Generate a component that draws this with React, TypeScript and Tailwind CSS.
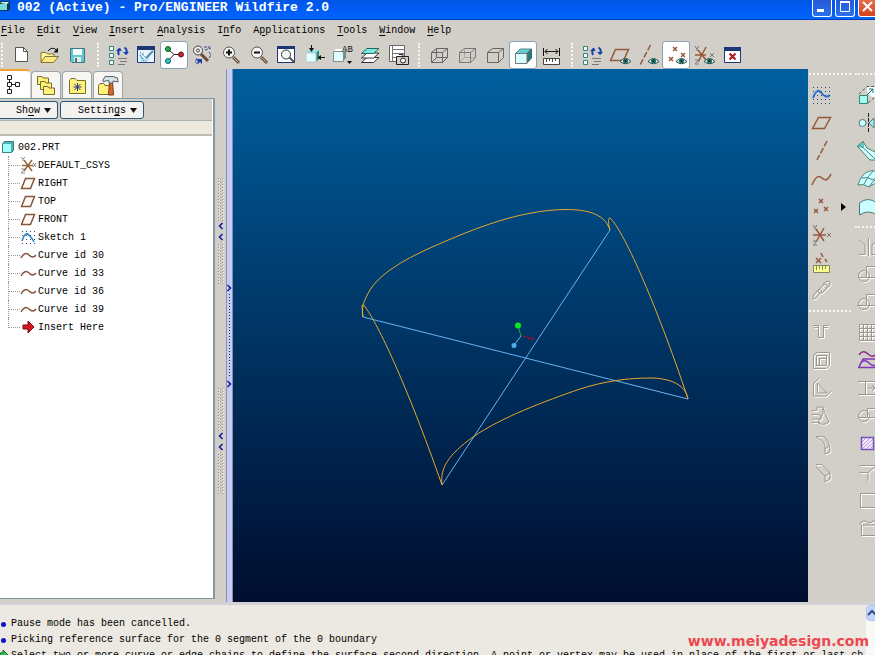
import React from "react";

const menus = [
  { label: "File", key: 0 },
  { label: "Edit", key: 0 },
  { label: "View", key: 0 },
  { label: "Insert", key: 0 },
  { label: "Analysis", key: 0 },
  { label: "Info", key: 1 },
  { label: "Applications", key: 1 },
  { label: "Tools", key: 0 },
  { label: "Window", key: 0 },
  { label: "Help", key: 0 },
];

const messages = [
  "Pause mode has been cancelled.",
  "Picking reference surface for the 0 segment of the 0 boundary",
];

const prompt =
  "Select two or more curve or edge chains to define the surface second direction. A point or vertex may be used in place of the first or last ch";

const Mnemonic: React.FC<{ label: string; at: number }> = ({ label, at }) => (
  <>
    {label.slice(0, at)}
    <span className="underline underline-offset-2">{label[at]}</span>
    {label.slice(at + 1)}
  </>
);

const Icon: React.FC<{ children: React.ReactNode }> = ({ children }) => (
  <svg viewBox="0 0 24 24" className="w-6 h-6 flex-shrink-0" fill="none" aria-hidden="true">
    {children}
  </svg>
);

// Embossed look of an unavailable command
const Disabled: React.FC<{ d: string }> = ({ d }) => (
  <Icon>
    <path d={d} transform="translate(1 1)" stroke="#fff" />
    <path d={d} stroke="#9c988f" />
  </Icon>
);

const Eye = () => (
  <g>
    <path d="M12 18.500Q17.500 12.500 23 18.500Q17.500 23 12 18.500Z" fill="#d7e4df" stroke="#31524e" />
    <circle cx="17.500" cy="18" r="2.500" fill="#1d6d66" />
    <circle cx="17.500" cy="18" r="1" fill="#062b2b" />
  </g>
);

const Magnifier = () => (
  <g>
    <path d="M15 14L21 20" stroke="#6b4a3c" strokeWidth="3" />
    <path d="M15 14L20.500 19.500" stroke="#c9b5a8" />
    <circle cx="11" cy="9.500" r="5.500" fill="#f4f4f0" stroke="#555" />
  </g>
);

const New = () => (
  <Icon>
    <path d="M6.500 4.500H14.500L18.500 8.500V18.500H6.500Z" fill="#fff" stroke="#555" />
    <path d="M14.500 4.500V8.500H18.500" stroke="#555" />
  </Icon>
);

const Open = () => (
  <Icon>
    <path d="M4 19V9.500H9L10.500 11H17V14" fill="#fff9a0" stroke="#857433" />
    <path d="M4 19.500L8 13.500H21.500L16.500 19.500Z" fill="#ffe982" stroke="#857433" />
    <path d="M11 8Q15 3 19.500 7" stroke="#111" />
    <path d="M21 4.500V9.500H16.500Z" fill="#111" />
  </Icon>
);

const Save = () => (
  <Icon>
    <path d="M5.500 5.500H19.500V19.500H7L5.500 18Z" fill="#63c9cf" stroke="#3d7680" />
    <path d="M8 6H17V12H8Z" fill="#f4fdfd" />
    <path d="M9 14H16V19H9Z" fill="#e3efef" />
    <path d="M10 15H12V19H10Z" fill="#3d7680" />
  </Icon>
);

const TreeRegen = () => (
  <Icon>
    <path d="M3.500 3.500H7.500V7.500H3.500ZM3.500 10.500H7.500V14.500H3.500ZM3.500 17.500H7.500V21.500H3.500Z" fill="#e8fffb" stroke="#3d8079" />
    <path d="M13 12Q11 8 14.500 5.500M18.500 4.500Q22 6.500 20 11" stroke="#173fae" strokeWidth="2" />
    <path d="M10 8H16L13 5ZM17 9H23L20 12Z" fill="#173fae" />
    <path d="M12 15.500H21M14 18.500H21M12 21.500H19" stroke="#777" />
  </Icon>
);

const Repaint = () => (
  <Icon>
    <path d="M3.500 3.500H20.500V19.500H3.500Z" fill="#e8f7ff" stroke="#193779" />
    <path d="M3 3H21V7H3Z" fill="#193779" />
    <path d="M5 10L11 16L19 8L13 19H7Z" fill="#b0dbf4" />
    <path d="M12 15L19 8" stroke="#5888ae" strokeWidth="2" />
    <path d="M6 9L12 15M6 12L10 18M9 10V13" stroke="#5888ae" strokeDasharray="2 1" />
  </Icon>
);

const SpinCenter = () => (
  <Icon>
    <path d="M6 6L12 11.500H18M12 11.500L6 18" stroke="#222" />
    <circle cx="6" cy="6" r="2.500" fill="#21b14b" stroke="#114f24" />
    <circle cx="6" cy="18" r="2.500" fill="#2bc9c4" stroke="#125a62" />
    <circle cx="19" cy="11.500" r="2.500" fill="#d01f35" stroke="#640e18" />
  </Icon>
);

const Orient = () => (
  <Icon>
    <path d="M11 11L18 18" stroke="#6b4a3c" strokeWidth="3" />
    <circle cx="8" cy="7.500" r="4.500" fill="#eceae2" stroke="#444" />
    <circle cx="8" cy="7.500" r="1.500" stroke="#444" />
    <path d="M14 4H20M15 7L21 5M19 9Q22 12 19 15M8 21Q4 20 7 15" stroke="#29479b" strokeDasharray="3 1" />
    <path d="M7 16H12V21L10 19L8 21Z" fill="#173fae" />
  </Icon>
);

const ZoomIn = () => (
  <Icon>
    <Magnifier />
    <path d="M8 9.500H14M11 6.500V12.500" stroke="#111" strokeWidth="2" />
  </Icon>
);

const ZoomOut = () => (
  <Icon>
    <Magnifier />
    <path d="M8 9.500H14" stroke="#111" strokeWidth="2" />
  </Icon>
);

const Refit = () => (
  <Icon>
    <path d="M3.500 3.500H20.500V19.500H3.500Z" fill="#fff" stroke="#193779" />
    <path d="M3 3H21V6H3Z" fill="#193779" />
    <path d="M15 14L20 19" stroke="#555" strokeWidth="2" />
    <circle cx="12" cy="11.500" r="4.500" fill="#f3f7f7" stroke="#333" />
  </Icon>
);

const Reorient = () => (
  <Icon>
    <path d="M4 10L7 7H17L14 10Z" fill="#8fe6e0" />
    <path d="M14 10L17 7V16L14 19Z" fill="#2b8b84" />
    <path d="M4 10H14V19H4Z" fill="#e2ffff" stroke="#b5c8c8" />
    <path d="M9.500 2V7M23 14.500H18" stroke="#111" />
    <path d="M7 5H12L9.500 9ZM19 12V17L15.500 14.500Z" fill="#111" />
  </Icon>
);

const SavedViews = () => (
  <Icon>
    <path d="M3 9L6 6H16L13 9Z" fill="#fff" />
    <path d="M13 9L16 6V15L13 18Z" fill="#6a8f8f" />
    <path d="M3.500 8.500H13.500V18.500H3.500Z" fill="#dffeff" stroke="#888" />
    <text x="12" y="9" className="font-['Liberation_Mono',monospace] text-[9px]" fill="#111">AB</text>
    <path d="M17 18H22L19.500 21Z" fill="#111" />
  </Icon>
);

const Layers = () => (
  <Icon>
    <path d="M3.500 19.500L9 14.500H21L15.500 19.500Z" fill="#fff" stroke="#333" />
    <path d="M3.500 15L9 10H21L15.500 15Z" fill="#fff" stroke="#333" />
    <path d="M3.500 10.500L9 5.500H21L15.500 10.500Z" fill="#77e9df" stroke="#28655f" />
  </Icon>
);

const ViewManager = () => (
  <Icon>
    <path d="M3.500 2.500H18.500V18.500H3.500Z" fill="#fff" stroke="#666" />
    <path d="M6 6.500H18M6 10.500H18M6 14.500H14M6.500 3V18" stroke="#777" />
    <path d="M10.500 13.500H22.500V21.500H10.500ZM13 11.500H17V13" fill="#d3d0c8" stroke="#222" />
    <circle cx="17" cy="17.500" r="2.500" fill="#fff" stroke="#222" />
  </Icon>
);

const cubeOutline = "M4.500 9.500H15.500V19.500H4.500ZM4.500 9.500L9.500 5.500H20.500V14.500L15.500 19.500M15.500 9.500L20.500 5.500";

const Wireframe = () => (
  <Icon>
    <path d={cubeOutline + "M9.500 5.500V14.500H20.500M4.500 19.500L9.500 14.500"} stroke="#666" />
  </Icon>
);

const HiddenLine = () => (
  <Icon>
    <path d="M9.500 5.500V14.500H20.500M4.500 19.500L9.500 14.500" stroke="#aaa" />
    <path d={cubeOutline} stroke="#777" />
  </Icon>
);

const NoHidden = () => (
  <Icon>
    <path d={cubeOutline} stroke="#666" />
  </Icon>
);

const Shaded = () => (
  <Icon>
    <path d="M4.500 10.500L9 6H20.500L16 10.500Z" fill="#65ced0" stroke="#568b8d" />
    <path d="M16 10.500L20.500 6V15L16 20Z" fill="#267d7b" stroke="#376868" />
    <path d="M4.500 10.500H16V20.500H4.500Z" fill="#d8ffff" stroke="#777" />
  </Icon>
);

const Measure = () => (
  <Icon>
    <path d="M4.500 5V13M20.500 5V13M6 8.500H19M8.500 6L6 8.500L8.500 11M16.500 6L19 8.500L16.500 11" stroke="#111" />
    <path d="M4.500 15.500H20.500V21.500H4.500Z" fill="#fff" stroke="#444" />
    <path d="M7.500 16V19M10.500 16V18M13.500 16V19M16.500 16V18" stroke="#444" />
  </Icon>
);

const PlaneShow = () => (
  <Icon>
    <path d="M2.500 17.500L7.500 6.500H20.500L15.500 17.500Z" stroke="#96583c" strokeWidth="1.500" />
    <Eye />
  </Icon>
);

const AxisShow = () => (
  <Icon>
    <path d="M14.500 2L4 22" stroke="#96583c" strokeWidth="1.500" strokeDasharray="6 2" />
    <Eye />
  </Icon>
);

const PointShow = () => (
  <Icon>
    <path d="M9 4L13 8M13 4L9 8M17 10L21 14M21 10L17 14M5 14L9 18M9 14L5 18" stroke="#96583c" strokeWidth="1.500" />
    <Eye />
  </Icon>
);

const CsysShow = () => (
  <Icon>
    <path d="M3 12H14M6 7L14 17M14 4L6 19" stroke="#96583c" strokeWidth="1.500" />
    <path d="M3 3L5 6L7 3M5 6V8M18 10L22 14M22 10L18 14M3 17H7L3 21H7" stroke="#777" />
    <Eye />
  </Icon>
);

const CloseWindow = () => (
  <Icon>
    <path d="M4.500 5.500H20.500V19.500H4.500Z" fill="#fff" stroke="#193779" />
    <path d="M4 4H21V8H4Z" fill="#193779" />
    <path d="M9.500 10.500L15.500 16.500M15.500 10.500L9.500 16.500" stroke="#b01822" strokeWidth="2" />
  </Icon>
);

type Tool = { name: string; icon: React.FC; on?: boolean };

const toolGroups: Tool[][] = [
  [
    { name: "New", icon: New },
    { name: "Open", icon: Open },
    { name: "Save", icon: Save },
  ],
  [
    { name: "Regenerate", icon: TreeRegen },
    { name: "Repaint", icon: Repaint },
    { name: "Spin center", icon: SpinCenter, on: true },
    { name: "Orient mode", icon: Orient },
    { name: "Zoom in", icon: ZoomIn },
    { name: "Zoom out", icon: ZoomOut },
    { name: "Refit", icon: Refit },
    { name: "Reorient", icon: Reorient },
    { name: "Saved views", icon: SavedViews },
    { name: "Layers", icon: Layers },
    { name: "View manager", icon: ViewManager },
  ],
  [
    { name: "Wireframe", icon: Wireframe },
    { name: "Hidden line", icon: HiddenLine },
    { name: "No hidden", icon: NoHidden },
    { name: "Shading", icon: Shaded, on: true },
    { name: "Measure", icon: Measure },
  ],
  [
    { name: "Model tree", icon: TreeRegen },
    { name: "Datum planes", icon: PlaneShow },
    { name: "Datum axes", icon: AxisShow },
    { name: "Datum points", icon: PointShow, on: true },
    { name: "Coordinate systems", icon: CsysShow },
    { name: "Close window", icon: CloseWindow },
  ],
];

const ToolButton: React.FC<{ tool: Tool }> = ({ tool }) => (
  <button
    type="button"
    aria-label={tool.name}
    aria-pressed={tool.on}
    className={`w-7 h-7 flex-shrink-0 flex items-center justify-center rounded-[3px] ${
      tool.on ? "bg-white border border-[#8aa3b5]" : ""
    }`}
  >
    <tool.icon />
  </button>
);

const Planar = () => (
  <Icon>
    <path d="M3.500 17.500L9.500 6.500H21.500L15.500 17.500Z" stroke="#96583c" strokeWidth="1.500" />
  </Icon>
);

const SketchIcon = () => (
  <Icon>
    <path d="M4 4.500H22M4 8.500H22M4 12.500H22M4 16.500H22M4 20.500H22" stroke="#34446c" strokeDasharray="1 3" />
    <path d="M4 15Q8 4 12.500 10T21 12" stroke="#286ed0" strokeWidth="2" />
  </Icon>
);

const AxisIcon = () => (
  <Icon>
    <path d="M18 2L8 21" stroke="#96583c" strokeWidth="1.500" strokeDasharray="6 2" />
  </Icon>
);

const CurveIcon = () => (
  <Icon>
    <path d="M3 18Q8 6 13 11T22 7" stroke="#96583c" strokeWidth="1.500" />
  </Icon>
);

const PointsIcon = () => (
  <Icon>
    <path d="M10 4L14 8M14 4L10 8M15 12L19 16M19 12L15 16M5 14L9 18M9 14L5 18" stroke="#96583c" strokeWidth="1.500" />
  </Icon>
);

const CsysIcon = () => (
  <Icon>
    <path d="M4 12H17M7 6L15 18M15 5L7 19" stroke="#96583c" strokeWidth="1.500" />
    <path d="M4 2L6 5L8 2M6 5V7M18 10L22 14M22 10L18 14M4 18H8L4 22H8" stroke="#777" />
  </Icon>
);

const AnalysisIcon = () => (
  <Icon>
    <path d="M7 7L12 12M12 7L7 12M12 2L14 6M16 8L18 11" stroke="#96583c" strokeWidth="1.500" />
    <path d="M4.500 14.500H20.500V21.500H4.500Z" fill="#faff8f" stroke="#86845d" />
    <path d="M7.500 15V19M10.500 15V18M13.500 15V19M16.500 15V18" stroke="#86845d" />
  </Icon>
);

const ExtrudeIcon = () => (
  <Icon>
    <path d="M12 4H24V14H17L12 9Z" fill="#f2ffff" />
    <path d="M4.500 12.500H12.500V20.500H4.500Z" fill="#a0fff2" stroke="#397f78" />
    <path d="M4 11L12 3.500H24M13 20L21 13" stroke="#555" strokeDasharray="3 2" />
    <path d="M12 12L18 6M14 6H18V10" stroke="#23756f" />
  </Icon>
);

const RevolveIcon = () => (
  <Icon>
    <path d="M13.500 2V22" stroke="#222" strokeDasharray="4 1" />
    <circle cx="7.500" cy="12" r="3.500" fill="#caffff" stroke="#587675" />
    <path d="M14 12L19 7V17Z" fill="#9aeeee" stroke="#587675" />
  </Icon>
);

const SweepIcon = () => (
  <Icon>
    <path d="M2.500 7L8 2.500L12 9L24 15V21H15L3 8Z" fill="#d5ffff" stroke="#397f78" />
    <path d="M2.500 7L8 8.500V2.500M8 8.500L20 20" stroke="#397f78" />
    <path d="M3 7L7 4V8Z" fill="#3dc7b8" />
  </Icon>
);

const BoundaryIcon = () => (
  <Icon>
    <path d="M3 18Q6 8 12 5Q17 2 24 5V17Q20 15 14 20Q8 16 3 18Z" fill="#caffff" stroke="#4d8584" />
    <path d="M7 11Q12 9 18 13L24 8M9 17Q13 9 18 4M14 20Q17 14 24 10" stroke="#4d8584" />
  </Icon>
);

const StyleIcon = () => (
  <Icon>
    <path d="M4.500 20V8Q13 1 22 8V20Q13 14 4.500 20Z" fill="#caffff" stroke="#4d7776" />
  </Icon>
);

const WaveIcon = () => (
  <Icon>
    <path d="M4 7Q8 1 13 6T22 5" stroke="#8f2a8d" strokeWidth="1.500" />
    <path d="M4 19L8 11H24M3 19.500H24M5 16Q9 10 14 15T23 15" stroke="#8034bd" strokeWidth="1.500" />
  </Icon>
);

const HatchIcon = () => (
  <Icon>
    <path d="M6.500 5.500H18.500V17.500H6.500Z" fill="#f8efff" stroke="#7152b7" strokeWidth="1.500" />
    <path d="M7 10L11 6M7 14L15 6M7 17L18 7M11 17L18 11M15 17L18 14" stroke="#b48be0" />
  </Icon>
);

const datumTools: Tool[] = [
  { name: "Sketch", icon: SketchIcon },
  { name: "Datum plane", icon: Planar },
  { name: "Datum axis", icon: AxisIcon },
  { name: "Datum curve", icon: CurveIcon },
  { name: "Datum point", icon: PointsIcon },
  { name: "Coordinate system", icon: CsysIcon },
  { name: "Analysis feature", icon: AnalysisIcon },
];

const chain = "M4 17L10 10L13 12L7 19L4 20ZM9 12L15 5L18 6V9L13 14L10 14ZM14 5L18 2L21 3V6L18 9";

const engineering = [
  { name: "Hole", d: "M4 5.500H9.500V17.500H14.500V5.500H20M5 7.500H9M15 7.500H19" },
  { name: "Shell", d: "M4.500 8L7 4.500H20.500V17L17 20.500H4.500ZM7.500 7.500H17.500V17.500H7.500ZM10.500 10.500H17M10.500 10.500V17L7.500 17.500" },
  { name: "Rib", d: "M4.500 8V20H17L22 15M8.500 17V7L18 17ZM4 8L10 2" },
  { name: "Draft", d: "M3 6.500H8M3 18.500H11M3 10.500H8Q13 11 12 15H3M8 6V3L14 3L16 9L20 18Q15 22 9 19L14 9V4" },
  { name: "Round", d: "M7 4.500H14Q21 8 21 20L16 22V17Q17 10 9 6ZM16 17L21 13" },
  { name: "Chamfer", d: "M7 4.500H13L21 13V19L16 22V16L7 7M16 16L21 13" },
];

const surfaceTools: Tool[] = [
  { name: "Extrude", icon: ExtrudeIcon },
  { name: "Revolve", icon: RevolveIcon },
  { name: "Sweep", icon: SweepIcon },
  { name: "Boundary blend", icon: BoundaryIcon },
  { name: "Style", icon: StyleIcon },
];

const ring = "M3.500 12A5.500 5.500 0 1 1 14.500 12A5.500 5.500 0 1 1 3.500 12";
const edit: { name: string; d?: string; icon?: React.FC }[] = [
  { name: "Mirror", d: "M13.500 2V20M4 18.500H10V9L4 4M23 18.500H17V9L23 4" },
  { name: "Merge", d: "M24 2.500H11.500V13.500H24M3 13.500H11" + ring },
  { name: "Trim", d: "M24 2.500H11.500V13.500H24M2 13.500H11" + ring },
  { name: "Pattern", d: "M4.500 4.500H23V20.500H4.500ZM8.500 5V20M12.500 5V20M16.500 5V20M20.500 5V20M5 8.500H23M5 12.500H23M5 16.500H23" },
  { name: "Wrap", icon: WaveIcon },
  { name: "Extend", d: "M3 5.500H24M3 18.500H24M10.500 5V19M13 12H20M17 9L20 12L17 15" },
  { name: "Offset", d: "M24 4.500H12.500V13.500H24M3 13.500H12" + ring },
  { name: "Fill", icon: HatchIcon },
  { name: "Intersect", d: "M5 5.500H22M5 12.500H13V21M13 12.500L22 5M17 5.500H22V10" },
  { name: "Thicken", d: "M5.500 5.500H24V19.500H5.500Z" },
  { name: "Solidify", d: "M6.500 9L4.500 7.500L8 5H11Q14 9 18 5H24M6.500 9V19.500H24M8 9H24" },
];

const Row: React.FC<{ tool: Tool; flyout?: boolean }> = ({ tool, flyout }) => (
  <div className="flex items-center">
    <button type="button" aria-label={tool.name} className="h-7 flex items-center">
      <tool.icon />
    </button>
    {flyout && (
      <button type="button" aria-label="More point types" className="ml-2">
        <svg viewBox="0 0 5 8" className="w-[5px] h-2" aria-hidden="true">
          <path d="M0 0L5 4L0 8Z" fill="#000" />
        </svg>
      </button>
    )}
  </div>
);

const DottedRule = () => <div className="border-t-2 border-dotted border-[#f7f6f2]" />;

const SideTools = () => (
  <aside className="w-[67px] flex-shrink-0 flex overflow-hidden bg-[#d2cfc8]">
    <div className="w-[47px] flex-shrink-0 pl-px">
      <div className="h-3 pt-1 pr-1"><DottedRule /></div>
      {datumTools.map((t) => (
        <Row key={t.name} tool={t} flyout={t.name === "Datum point"} />
      ))}
      <button type="button" aria-label="Reference" disabled className="h-7 flex items-center">
        <Disabled d={chain} />
      </button>
      <div className="h-[13px] pt-[5px] pr-1"><DottedRule /></div>
      {engineering.map((e) => (
        <button key={e.name} type="button" aria-label={e.name} disabled className="h-7 flex items-center">
          <Disabled d={e.d} />
        </button>
      ))}
    </div>
    <div className="w-6 flex-shrink-0">
      <div className="h-3 pt-1"><DottedRule /></div>
      {surfaceTools.map((t) => (
        <Row key={t.name} tool={t} />
      ))}
      <div className="h-[13px] pt-[5px]"><DottedRule /></div>
      {edit.map((e) => (
        <button key={e.name} type="button" aria-label={e.name} className="h-7 flex items-center">
          {e.icon ? <e.icon /> : <Disabled d={e.d!} />}
        </button>
      ))}
    </div>
  </aside>
);

const TreeIcon: React.FC<{ children: React.ReactNode }> = ({ children }) => (
  <svg viewBox="0 0 18 18" className="w-[18px] h-[18px] flex-shrink-0" fill="none" aria-hidden="true">
    {children}
  </svg>
);

const TreeCsys = () => (
  <TreeIcon>
    <path d="M2 9.500H13M4 4L12 15M12 4L4 15" stroke="#96683c" strokeWidth="1.500" />
    <path d="M1 1L3 3L5 1M3 3V5M13 7L16 11M16 7L13 11M1 13H5L1 17H5" stroke="#888" />
  </TreeIcon>
);

const TreePlane = () => (
  <TreeIcon>
    <path d="M1.500 14.500L5.500 4.500H14.500L10.500 14.500Z" fill="#fffaf3" stroke="#85553d" strokeWidth="1.500" />
  </TreeIcon>
);

const TreeSketch = () => (
  <TreeIcon>
    <path d="M2 3.500H15M2 7.500H15M2 11.500H15M2 15.500H15" stroke="#34446c" strokeDasharray="1 3" />
    <path d="M2 13Q5 3 9 7Q12 10 14 14" stroke="#2386c8" strokeWidth="1.500" />
  </TreeIcon>
);

const TreeCurve = () => (
  <TreeIcon>
    <path d="M1 12Q5 5 9 9T16 9" stroke="#85553d" strokeWidth="1.500" />
  </TreeIcon>
);

const TreeArrow = () => (
  <TreeIcon>
    <path d="M3 7H8V3L14 9L8 15V11H3Z" fill="#d91524" stroke="#7d0710" />
  </TreeIcon>
);

const features = [
  { name: "DEFAULT_CSYS", icon: TreeCsys },
  { name: "RIGHT", icon: TreePlane },
  { name: "TOP", icon: TreePlane },
  { name: "FRONT", icon: TreePlane },
  { name: "Sketch 1", icon: TreeSketch },
  { name: "Curve id 30", icon: TreeCurve },
  { name: "Curve id 33", icon: TreeCurve },
  { name: "Curve id 36", icon: TreeCurve },
  { name: "Curve id 39", icon: TreeCurve },
  { name: "Insert Here", icon: TreeArrow },
];

const PartCube = () => (
  <svg viewBox="0 0 14 14" className="w-3.5 h-3.5" aria-hidden="true">
    <path d="M1.500 3.500L3.500 1.500H12.500V10.500L10.500 12.500H1.500Z" fill="#4bb3b4" stroke="#397f83" />
    <path d="M2 4H10V12H2Z" fill="#a3fffb" />
  </svg>
);

const tabs = [
  {
    name: "Model Tree",
    icon: (
      <path d="M4.500 2.500H8.500V6.500H4.500ZM4.500 9.500H8.500V13.500H4.500ZM4.500 16.500H8.500V20.500H4.500ZM12.500 9.500H16.500V13.500H12.500ZM6.500 7V9M6.500 14V16M9 11.500H12" stroke="#222" />
    ),
  },
  {
    name: "Folder Browser",
    icon: (
      <g fill="#fff27a" stroke="#766c2e">
        <path d="M3.500 11.500V3.500H8L9 5H14.500V11.500Z" />
        <path d="M6.500 16.500V8.500H11L12 10H17.500V16.500Z" />
        <path d="M9.500 21.500V13.500H14L15 15H20.500V21.500Z" />
      </g>
    ),
  },
  {
    name: "Favorites",
    icon: (
      <g>
        <path d="M4.500 20.500V7.500L6 5.500H10L12 7.500H20.500V20.500Z" fill="#fff27a" stroke="#766c2e" />
        <path d="M12.500 10V18M8.500 14H16.500M9.500 11L15.500 17M15.500 11L9.500 17" stroke="#293287" />
      </g>
    ),
  },
  {
    name: "Connections",
    icon: (
      <g>
        <path d="M2.500 21.500V12.500L4 10.500H8L9 12.500H13.500V21.500Z" fill="#fff27a" stroke="#766c2e" />
        <path d="M13.500 9H16.500L17.500 22H12.500Z" fill="#d46d2b" stroke="#7b371a" />
        <path d="M7 7L9 3.500H17L21.500 5L22 9L17 8V10H13V7.500L7 8.500Z" fill="#d7e0e3" stroke="#53646e" />
      </g>
    ),
  },
];

const Caret = () => (
  <svg viewBox="0 0 7 5" className="w-[7px] h-[5px]" aria-hidden="true">
    <path d="M0 0H7L3.500 5Z" fill="#111" />
  </svg>
);

const Navigator = () => (
  <section className="w-[215px] flex-shrink-0 flex flex-col pb-[3px]">
    <div className="h-[29px] flex items-end gap-px flex-shrink-0">
      {tabs.map((tab, i) => (
        <button
          key={tab.name}
          type="button"
          aria-label={tab.name}
          className={
            i === 0
              ? "w-[30px] h-[29px] bg-white border-t-2 border-[#f0a02c] rounded-tr-sm flex items-center justify-center"
              : "w-[30px] h-[27px] bg-[#f7f6f2] border border-b-0 border-[#9ba5ab] rounded-t-sm flex items-center justify-center"
          }
        >
          <svg viewBox="0 0 24 24" className="w-6 h-6" fill="none" aria-hidden="true">{tab.icon}</svg>
        </button>
      ))}
    </div>
    <div className="flex-1 min-h-0 flex flex-col border-y border-r-2 border-[#8298a3] bg-white pr-px pb-px">
      <div className="bg-[#d2cfc8] flex gap-0.5 pt-0.5 pb-px">
        <button
          type="button"
          className="w-[58px] h-[18px] bg-[#f3f2ee] border border-l-0 border-[#28577a] rounded-r-[3px] flex items-center justify-end gap-1 pr-1.5"
        >
          <span className="pt-0.5"><Mnemonic label="Show" at={2} /></span>
          <Caret />
        </button>
        <button
          type="button"
          className="w-[84px] h-[18px] bg-[#f3f2ee] border border-[#28577a] rounded-[3px] flex items-center justify-end gap-1 pr-1.5"
        >
          <span className="pt-0.5"><Mnemonic label="Settings" at={6} /></span>
          <Caret />
        </button>
      </div>
      <div className="h-4 bg-[#ece9df] border-t border-b-2 border-[#a9b4b4] border-b-[#bdbab2]" />
      <ul className="flex-1 min-h-0">
        <li>
          <div className="h-[18px] mt-0.5 flex items-center pl-px gap-[3px]">
            <PartCube />
            <span className="pt-0.5">002.PRT</span>
          </div>
          <ul className="pl-2">
            {features.map((f, i) => (
              <li key={f.name} className="h-[18px] flex items-center">
                <div
                  className={`w-3 self-stretch border-dotted border-[#999] ${
                    i === features.length - 1 ? "" : "border-l"
                  }`}
                >
                  <div
                    className={`h-[10px] border-b border-dotted border-[#999] ${
                      i === features.length - 1 ? "border-l" : ""
                    }`}
                  />
                </div>
                <f.icon />
                <span className="pt-0.5">{f.name}</span>
              </li>
            ))}
          </ul>
        </li>
      </ul>
    </div>
  </section>
);

const Grip = () => (
  <svg viewBox="0 0 8 106" className="w-2 h-[106px]" fill="none" aria-hidden="true">
    <path d="M1.500 0V106M5.500 0V106" stroke="#99958c" strokeDasharray="1 2" />
    <path d="M3.500 1V106" stroke="#99958c" strokeDasharray="1 2" />
    <path d="M6.500 1V106M2.500 1V106" stroke="#f4f2ec" strokeDasharray="1 2" />
    <path d="M0 43H8V64H0Z" fill="#d2cfc8" />
    <path d="M5.500 45L2.500 48L5.500 51M5.500 56L2.500 59L5.500 62" stroke="#1212a4" strokeWidth="1.500" />
  </svg>
);

const Splitter = () => (
  <div className="flex flex-shrink-0">
    <div className="w-[11px] flex flex-col items-center justify-center gap-[104px] bg-[#d2cfc8]">
      <button type="button" aria-label="Collapse navigator"><Grip /></button>
      <button type="button" aria-label="Collapse browser"><Grip /></button>
    </div>
    <div className="w-[7px] flex flex-col items-center justify-center bg-[#cbccf3] border-x border-[#8292b5]">
      <svg viewBox="0 0 5 104" className="w-[5px] h-[104px]" fill="none" aria-hidden="true">
        <path d="M2.500 10V94" stroke="#25254a" strokeDasharray="1 2" />
        <path d="M0.500 1L3.500 4L0.500 7M0.500 97L3.500 100L0.500 103" stroke="#1212a4" strokeWidth="1.500" />
      </svg>
    </div>
  </div>
);

const Viewport = () => (
  <main className="flex-1 min-w-0 bg-gradient-to-b from-[#005f9e] to-[#000e2f]">
    <svg viewBox="233 69 575 533" className="w-full h-full" fill="none" role="img" aria-label="Boundary curves of part 002">
      <g stroke="#68b3f5">
        <path d="M610 230L442 485M363 317L688 399" />
      </g>
      <g stroke="#e9a82c">
        <path d="M363 317C361 308 364 300 370 290C380 274 403 260 430 248C475 228 520 210 566 209.500C590 209.500 605 215 610 230" />
        <path d="M610 230C608 224 608 217 610 218C622 228 655 300 688 399" />
        <path d="M363 317L362 306Q363 303 366 308C378 325 405 380 442 485" />
        <path d="M442 485C440 468 448 455 473 437C500 418 545 401 580 389C605 381 628 378 650 378C672 378 686 386 688 399" />
      </g>
      <path d="M518 326L521 336" stroke="#20ae2c" />
      <path d="M521 336L514 345" stroke="#68b3f5" />
      <path d="M522 336L535 339M529 337V340M532 337V341" stroke="#8e1236" />
      <circle cx="518" cy="325.500" r="3" fill="#08ed18" />
      <circle cx="514" cy="345.500" r="2.500" fill="#54aee8" />
    </svg>
  </main>
);

const TitleBar = () => (
  <header className="h-5 flex-shrink-0 flex items-start overflow-hidden bg-gradient-to-b from-[#0055e5] via-[#005cf5] to-[#0066ff] border-b border-[#0040b5]">
    <svg viewBox="0 0 10 12" className="w-2.5 h-3 flex-shrink-0" aria-hidden="true">
      <path d="M0 1H10V9L8 11H0Z" fill="#123450" />
      <path d="M0 4H7V10H0Z" fill="#77ddda" />
      <path d="M0 3L2 2H9L7 4Z" fill="#c8ffff" />
    </svg>
    <h1 className="flex-1 min-w-0 pl-[7px] text-[13px] leading-4 font-bold text-white whitespace-nowrap">
      002 (Active) - Pro/ENGINEER Wildfire 2.0
    </h1>
    <div className="flex flex-shrink-0 gap-[3px] -mr-[3px]">
      <button type="button" aria-label="Minimize" className="w-5 h-[17px] rounded-b-[3px] border border-t-0 border-white bg-gradient-to-b from-[#2459d8] to-[#2a72ee]">
        <svg viewBox="0 0 18 16" className="w-[18px] h-4" aria-hidden="true"><path d="M4 9H11V12H4Z" fill="#fff" /></svg>
      </button>
      <button type="button" aria-label="Maximize" className="w-5 h-[17px] rounded-b-[3px] border border-t-0 border-white bg-gradient-to-b from-[#2459d8] to-[#2a72ee]">
        <svg viewBox="0 0 18 16" className="w-[18px] h-4" fill="none" aria-hidden="true"><path d="M4.500 2V11.500H13.500V2M4 2H14" stroke="#fff" /><path d="M4 1H14V3H4Z" fill="#fff" /></svg>
      </button>
      <button type="button" aria-label="Close" className="w-5 h-[17px] rounded-b-[3px] border border-t-0 border-white bg-gradient-to-b from-[#e76b48] to-[#d4431c]">
        <svg viewBox="0 0 18 16" className="w-[18px] h-4" aria-hidden="true"><path d="M4 2L13 11M13 2L4 11" stroke="#fff" strokeWidth="2" /></svg>
      </button>
    </div>
  </header>
);

const MessageArea = () => (
  <footer className="relative h-[53px] flex-shrink-0 flex overflow-hidden border-t-[3px] border-[#d3d2d5] bg-[#ebe9e1]">
    <div className="flex-1 min-w-0 pt-[11px] overflow-hidden whitespace-nowrap leading-4">
      {messages.map((m) => (
        <p key={m} className="flex items-center gap-1 pl-px">
          <span className="w-[5px] h-[5px] rounded-full bg-[#1010c8]" />
          <span className="pl-px">{m}</span>
        </p>
      ))}
      <p className="flex items-center gap-0.5">
        <svg viewBox="0 0 9 12" className="w-[9px] h-3 flex-shrink-0" aria-hidden="true">
          <path d="M0 3H3V0L9 6L3 12V9H0Z" fill="#26c94c" stroke="#115d23" />
        </svg>
        <span>{prompt}</span>
      </p>
    </div>
    <div className="w-[9px] flex-shrink-0 overflow-hidden bg-[#f8f8f6]">
      <button type="button" aria-label="Scroll up" className="w-4 h-4 rounded-sm border border-[#b0c4ee] bg-[#c4d5fc] flex items-center">
        <svg viewBox="0 0 14 8" className="w-3.5 h-2" fill="none" aria-hidden="true"><path d="M1 6L5 2L9 6" stroke="#344f85" strokeWidth="2" /></svg>
      </button>
    </div>
    <span className="absolute right-1.5 bottom-1 font-['DejaVu_Sans',sans-serif] text-[14px] leading-5 font-bold text-[#ed4850]">
      www.meiyadesign.com
    </span>
  </footer>
);

export default function App() {
  return (
    <div className="h-screen flex flex-col overflow-hidden bg-[#d2cfc8] font-['Liberation_Mono',monospace] text-[10px] leading-[14px] text-black">
      <TitleBar />
      <nav className="h-[21px] flex-shrink-0 flex items-center gap-3 pl-px">
        {menus.map((m) => (
          <button key={m.label} type="button">
            <Mnemonic label={m.label} at={m.key} />
          </button>
        ))}
      </nav>
      <div role="toolbar" className="h-7 flex-shrink-0 flex">
        {toolGroups.map((group, i) => (
          <div key={i} className="flex">
            <div className={`flex justify-center py-0.5 ${i === 0 ? "w-[7px] pr-1" : "w-[13px]"}`}>
              <div className="border-l-2 border-dotted border-[#f7f6f2]" />
            </div>
            {group.map((t) => (
              <ToolButton key={t.name} tool={t} />
            ))}
          </div>
        ))}
      </div>
      <div className="flex-1 min-h-0 flex">
        <Navigator />
        <Splitter />
        <Viewport />
        <SideTools />
      </div>
      <MessageArea />
    </div>
  );
}
